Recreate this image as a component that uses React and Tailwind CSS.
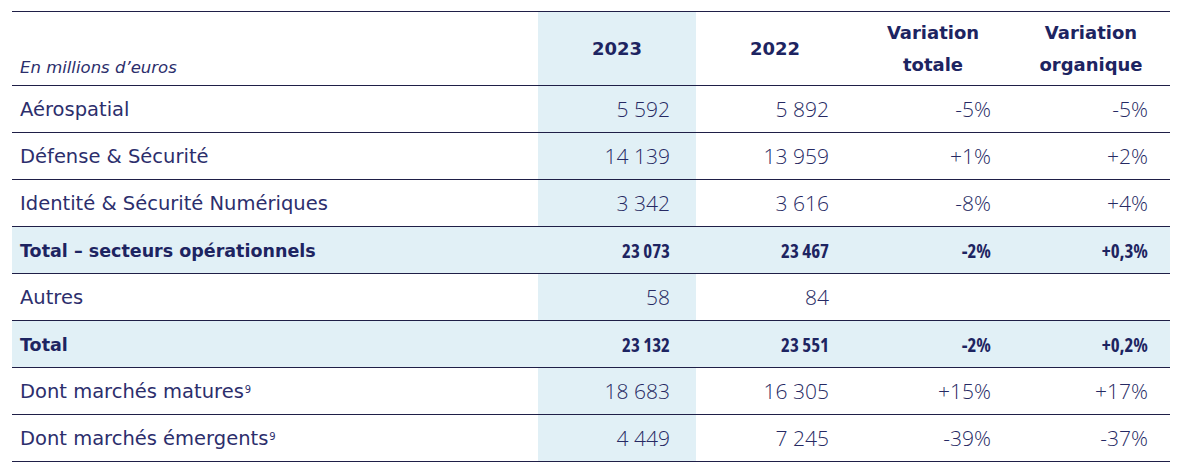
const rows = [
  { label: "Aérospatial", v: ["5 592", "5 892", "-5%", "-5%"] },
  { label: "Défense & Sécurité", v: ["14 139", "13 959", "+1%", "+2%"] },
  { label: "Identité & Sécurité Numériques", v: ["3 342", "3 616", "-8%", "+4%"] },
  { label: "Total – secteurs opérationnels", v: ["23 073", "23 467", "-2%", "+0,3%"], total: true },
  { label: "Autres", v: ["58", "84", "", ""] },
  { label: "Total", v: ["23 132", "23 551", "-2%", "+0,2%"], total: true },
  { label: "Dont marchés matures", sup: "9", v: ["18 683", "16 305", "+15%", "+17%"] },
  { label: "Dont marchés émergents", sup: "9", v: ["4 449", "7 245", "-39%", "-37%"] },
];

const pads = ["pr-[26px]", "pr-[25px]", "pr-[21px]", "pr-[22px]"];

const Row = ({ row }) => {
  const bg = row.total ? "bg-[#e1f0f6]" : "";
  return (
    <div className={`grid grid-cols-[526px_158px_158px_158px_158px] h-[47px] border-b border-[#1f1f47] ${bg}`}>
      <div
        className={`flex items-center pl-2 pt-[2px] ${
          row.total ? "font-bold text-[17.5px] text-[#1d2461]" : "text-[19.5px] text-[#2c2e6c]"
        }`}
      >
        <span>
          {row.label}
          {row.sup && <sup className="text-[10px] ml-[1px]">{row.sup}</sup>}
        </span>
      </div>
      {row.v.map((val, i) => (
        <div
          key={i}
          className={`flex items-center justify-end pt-[2px] ${pads[i]} ${
            i === 0 ? "bg-[#e1f0f6]" : ""
          } font-['Open_Sans',sans-serif] ${
            row.total
              ? "font-bold text-[19px] text-[#1d2461] [font-stretch:82%]"
              : "font-light text-[21px] text-[#262963] [font-stretch:88%]"
          }`}
        >
          {val}
        </div>
      ))}
    </div>
  );
};

export default function App() {
  return (
    <div className="w-[1183px] h-[473px] bg-white font-['DejaVu_Sans',sans-serif]">
      <div className="ml-[12px] w-[1158px] pt-[11px]">
        <div className="grid grid-cols-[526px_158px_158px_158px_158px] h-[75px] border-t border-b border-[#1f1f47]">
          <div className="flex items-end pl-2 pb-[4px] italic text-[16.5px] text-[#2c2e6c]">
            En millions d’euros
          </div>
          <div className="flex items-center justify-center bg-[#e1f0f6] font-bold text-[18px] text-[#1d2461]">
            2023
          </div>
          <div className="flex items-center justify-center font-bold text-[18px] text-[#1d2461]">
            2022
          </div>
          <div className="flex items-center justify-center text-center font-bold text-[18px] leading-[32px] text-[#1d2461]">
            Variation
            <br />
            totale
          </div>
          <div className="flex items-center justify-center text-center font-bold text-[18px] leading-[32px] text-[#1d2461]">
            Variation
            <br />
            organique
          </div>
        </div>
        {rows.map((row) => (
          <Row key={row.label} row={row} />
        ))}
      </div>
    </div>
  );
}
